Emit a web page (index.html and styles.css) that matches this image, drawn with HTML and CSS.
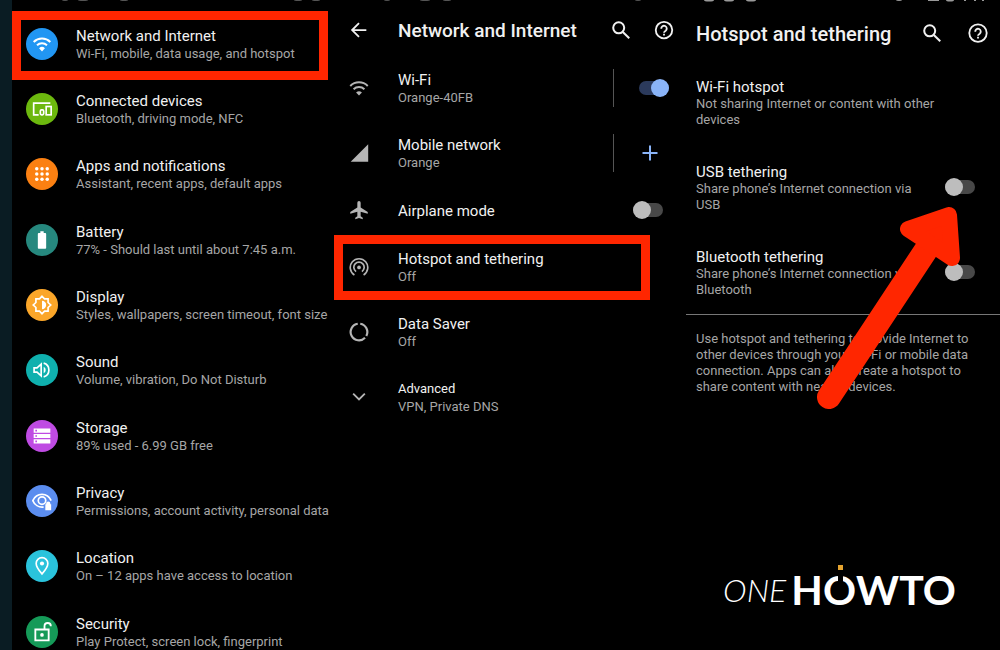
FILE: index.html
```
<!DOCTYPE html>
<html lang="en">
<head>
    <meta charset="UTF-8">
    <meta name="viewport" content="width=device-width, initial-scale=1.0">
    <title>Hotspot and tethering</title>
    <link rel="stylesheet" href="styles.css">
</head>
<body>
    <main class="screens">
        <section class="screen settings">
            <svg class="status" viewBox="0 0 322 4" fill="currentColor"><ellipse cx="53" cy="0" rx="3" ry="1"/><ellipse cx="71" cy="0" rx="5" ry="1"/><ellipse cx="112" cy="0" rx="4" ry="1"/><ellipse cx="286" cy="0" rx="4" ry="1"/><ellipse cx="304" cy="0" rx="4" ry="1"/></svg>
            <ul class="list">
                <li class="item">
                    <span class="badge blue">
                        <svg viewBox="0 0 24 24" fill="none" stroke="currentColor" stroke-width="2.4"><path d="M2 9.500a14.500 14.500 0 0 1 20 0M6 13.500a9 9 0 0 1 12 0"/><path d="M12 21l-3.500-4a5 5 0 0 1 7 0z" fill="currentColor" stroke="none"/></svg>
                    </span>
                    <div class="text">
                        <h3>Network and Internet</h3>
                        <p>Wi-Fi, mobile, data usage, and hotspot</p>
                    </div>
                </li>
                <li class="item">
                    <span class="badge green">
                        <svg viewBox="0 0 24 24" fill="none" stroke="currentColor" stroke-width="2"><path d="M22 5H2v14h6"/><rect x="10" y="13" width="4" height="6" rx="1.500"/><rect x="17" y="9" width="6" height="10"/></svg>
                    </span>
                    <div class="text">
                        <h3>Connected devices</h3>
                        <p>Bluetooth, driving mode, NFC</p>
                    </div>
                </li>
                <li class="item">
                    <span class="badge orange">
                        <svg viewBox="0 0 24 24" fill="currentColor"><circle cx="5" cy="5" r="2.300"/><circle cx="12" cy="5" r="2.300"/><circle cx="19" cy="5" r="2.300"/><circle cx="5" cy="12" r="2.300"/><circle cx="12" cy="12" r="2.300"/><circle cx="19" cy="12" r="2.300"/><circle cx="5" cy="19" r="2.300"/><circle cx="12" cy="19" r="2.300"/><circle cx="19" cy="19" r="2.300"/></svg>
                    </span>
                    <div class="text">
                        <h3>Apps and notifications</h3>
                        <p>Assistant, recent apps, default apps</p>
                    </div>
                </li>
                <li class="item">
                    <span class="badge teal">
                        <svg viewBox="0 0 24 24" fill="currentColor"><path d="M15.700 3.500H14V1.500h-4v2H8.300C7.600 3.500 7 4 7 4.800v16.400c0 .7.600 1.300 1.300 1.300h7.400c.7 0 1.300-.6 1.300-1.300V4.800c0-.8-.6-1.300-1.300-1.300z"/></svg>
                    </span>
                    <div class="text">
                        <h3>Battery</h3>
                        <p>77% - Should last until about 7:45 a.m.</p>
                    </div>
                </li>
                <li class="item">
                    <span class="badge amber">
                        <svg viewBox="0 0 24 24"><path d="M12 1.500l3 3.200h4.300V9l3.200 3-3.200 3v4.300H15l-3 3.200-3-3.200H4.700V15l-3.200-3 3.200-3V4.700H9z" fill="none" stroke="currentColor" stroke-width="2"/><path d="M12 7a5 5 0 0 1 0 10z" fill="currentColor"/></svg>
                    </span>
                    <div class="text">
                        <h3>Display</h3>
                        <p>Styles, wallpapers, screen timeout, font size</p>
                    </div>
                </li>
                <li class="item">
                    <span class="badge cyan">
                        <svg viewBox="0 0 24 24" fill="none" stroke="currentColor" stroke-width="2"><path d="M2.500 9.500v5H6l5 4.500V5L6 9.500z"/><path d="M14 3.800a8.500 8.500 0 0 1 0 16.400"/><path d="M14 8a4.500 4.500 0 0 1 0 8z" fill="currentColor" stroke="none"/></svg>
                    </span>
                    <div class="text">
                        <h3>Sound</h3>
                        <p>Volume, vibration, Do Not Disturb</p>
                    </div>
                </li>
                <li class="item">
                    <span class="badge purple">
                        <svg viewBox="0 0 24 24" fill="currentColor"><path fill-rule="evenodd" d="M2 3h20v5H2zM4 4.500v2h2v-2zM2 9.500h20v5H2zM4 11v2h2v-2zM2 16h20v5H2zM4 17.500v2h2v-2z"/></svg>
                    </span>
                    <div class="text">
                        <h3>Storage</h3>
                        <p>89% used - 6.99 GB free</p>
                    </div>
                </li>
                <li class="item">
                    <span class="badge indigo">
                        <svg viewBox="0 0 24 24"><g fill="none" stroke="currentColor" stroke-width="2"><path d="M14 19.200C8 20 3 16.500 1 11.500 3 7 7 4 12 4s9 3 11 7.500"/><circle cx="12" cy="11.500" r="4.500"/></g><path fill="currentColor" d="M16 16h1v-1a2.500 2.500 0 0 1 5 0v1h1v7h-7z"/></svg>
                    </span>
                    <div class="text">
                        <h3>Privacy</h3>
                        <p>Permissions, account activity, personal data</p>
                    </div>
                </li>
                <li class="item">
                    <span class="badge sky">
                        <svg viewBox="0 0 24 24"><path d="M12 21.500C8 17 5 13 5 9a7 7 0 0 1 14 0c0 4-3 8-7 12.500z" fill="none" stroke="currentColor" stroke-width="2"/><circle cx="12" cy="9" r="2.500" fill="currentColor"/></svg>
                    </span>
                    <div class="text">
                        <h3>Location</h3>
                        <p>On – 12 apps have access to location</p>
                    </div>
                </li>
                <li class="item">
                    <span class="badge emerald">
                        <svg viewBox="0 0 24 24"><path d="M4 9h16v13H4zM15 9V5a3.800 3.800 0 0 1 7.600 0" fill="none" stroke="currentColor" stroke-width="2.200"/><circle cx="12" cy="15.500" r="2.200" fill="currentColor"/></svg>
                    </span>
                    <div class="text">
                        <h3>Security</h3>
                        <p>Play Protect, screen lock, fingerprint</p>
                    </div>
                </li>
            </ul>
            <div class="highlight"></div>
        </section>

        <section class="screen network">
            <svg class="status" viewBox="0 0 352 4" fill="currentColor"><ellipse cx="53" cy="0" rx="3" ry="1"/><ellipse cx="91" cy="0" rx="5" ry="1"/><ellipse cx="113" cy="0" rx="4" ry="1"/><ellipse cx="304" cy="0" rx="3" ry="1"/></svg>
            <header class="bar">
                <button class="icon-btn back" aria-label="Back">
                    <svg viewBox="0 0 24 24" fill="none" stroke="currentColor" stroke-width="2"><path d="M20 11H4.500M12 3.500L4.500 11l7.500 7.500"/></svg>
                </button>
                <h2>Network and Internet</h2>
                <button class="icon-btn" aria-label="Search">
                    <svg viewBox="0 0 24 24" fill="none" stroke="currentColor" stroke-width="2.200"><circle cx="9.500" cy="8.500" r="6"/><path d="M14 13l7 7"/></svg>
                </button>
                <button class="icon-btn" aria-label="Help">
                    <svg viewBox="0 0 24 24" fill="none" stroke="currentColor" stroke-width="2"><circle cx="12" cy="11" r="9"/><path d="M9 9.500a3 3 0 1 1 4.800 2.200C12.600 12.500 12 13 12 14"/><path d="M12 15v2"/></svg>
                </button>
            </header>
            <ul class="list">
                <li class="item">
                    <span class="glyph">
                        <svg viewBox="0 0 24 24" fill="none" stroke="currentColor" stroke-width="2.400"><path d="M1.500 9.500a15 15 0 0 1 21 0M5.500 13.500a9.500 9.500 0 0 1 13 0"/><path d="M12 21l-3.500-3.500a5 5 0 0 1 7 0z" fill="currentColor" stroke="none"/></svg>
                    </span>
                    <div class="text">
                        <h3>Wi-Fi</h3>
                        <p>Orange-40FB</p>
                    </div>
                    <div class="action">
                        <input type="checkbox" class="switch" aria-label="Wi-Fi" checked>
                    </div>
                </li>
                <li class="item">
                    <span class="glyph">
                        <svg viewBox="0 0 24 24" fill="currentColor"><path d="M2 22.500h21v-21z"/></svg>
                    </span>
                    <div class="text">
                        <h3>Mobile network</h3>
                        <p>Orange</p>
                    </div>
                    <div class="action">
                        <button class="icon-btn add" aria-label="Add network">
                            <svg viewBox="0 0 24 24" fill="none" stroke="currentColor" stroke-width="2.400"><path d="M12 3v18M3 12h18"/></svg>
                        </button>
                    </div>
                </li>
                <li class="item short">
                    <span class="glyph">
                        <svg viewBox="0 0 24 24" fill="currentColor"><path d="M22.500 16.500v-2.200L14 9V3.200a2 2 0 0 0-4 0V9l-8.500 5.300v2.200L10 14v5.500L7.500 21.300V23l4.500-1.300 4.500 1.300v-1.700L14 19.500V14z"/></svg>
                    </span>
                    <div class="text">
                        <h3>Airplane mode</h3>
                    </div>
                    <input type="checkbox" class="switch" aria-label="Airplane mode">
                </li>
                <li class="item marked">
                    <span class="glyph">
                        <svg viewBox="0 0 24 24" fill="none" stroke="currentColor" stroke-width="2"><path d="M6.500 21.500a10.500 10.500 0 1 1 11 0M8.500 17.500a6.200 6.200 0 1 1 7 0"/><circle cx="12" cy="12.500" r="2.200" fill="currentColor" stroke="none"/></svg>
                    </span>
                    <div class="text">
                        <h3>Hotspot and tethering</h3>
                        <p>Off</p>
                    </div>
                    <div class="highlight"></div>
                </li>
                <li class="item">
                    <span class="glyph">
                        <svg viewBox="0 0 24 24" fill="none" stroke="currentColor" stroke-width="2.600"><path d="M10.500 2.100a10 10 0 1 0 8.700 16.800M13.500 2.100a10 10 0 0 1 7.300 14.600"/></svg>
                    </span>
                    <div class="text">
                        <h3>Data Saver</h3>
                        <p>Off</p>
                    </div>
                </li>
                <li class="item">
                    <span class="glyph">
                        <svg viewBox="0 0 24 24" fill="none" stroke="currentColor" stroke-width="2.200"><path d="M5 8l7 7 7-7"/></svg>
                    </span>
                    <div class="text">
                        <h3 class="small">Advanced</h3>
                        <p>VPN, Private DNS</p>
                    </div>
                </li>
            </ul>
        </section>

        <section class="screen tethering">
            <svg class="status bright" viewBox="0 0 314 4" fill="currentColor"><ellipse cx="23" cy="0" rx="5" ry="1.500"/><ellipse cx="43" cy="0" rx="5" ry="1.500"/><ellipse cx="65" cy="0" rx="5" ry="1.500"/><ellipse cx="213" cy="0" rx="3" ry="1"/><path d="M242 0h11v1h-11z"/><ellipse cx="264" cy="0" rx="4" ry="1.500"/><path d="M278 0h2v1h-2zM288 0h2v1h-2zM296 0h2v1h-2z"/></svg>
            <header class="bar">
                <h2>Hotspot and tethering</h2>
                <button class="icon-btn" aria-label="Search">
                    <svg viewBox="0 0 24 24" fill="none" stroke="currentColor" stroke-width="2.200"><circle cx="9.500" cy="8.500" r="6"/><path d="M14 13l7 7"/></svg>
                </button>
                <button class="icon-btn" aria-label="Help">
                    <svg viewBox="0 0 24 24" fill="none" stroke="currentColor" stroke-width="2"><circle cx="12" cy="11" r="9.500"/><path d="M9 9.500a3 3 0 1 1 4.800 2.200C12.600 12.500 12 13 12 14"/><path d="M12 15v2"/></svg>
                </button>
            </header>
            <ul class="list">
                <li class="item">
                    <div class="text">
                        <h3>Wi-Fi hotspot</h3>
                        <p>Not sharing Internet or content with other devices</p>
                    </div>
                </li>
                <li class="item">
                    <div class="text">
                        <h3>USB tethering</h3>
                        <p>Share phone’s Internet connection via USB</p>
                    </div>
                    <input type="checkbox" class="switch" aria-label="USB tethering">
                </li>
                <li class="item">
                    <div class="text">
                        <h3>Bluetooth tethering</h3>
                        <p>Share phone’s Internet connection via Bluetooth</p>
                    </div>
                    <input type="checkbox" class="switch" aria-label="Bluetooth tethering">
                </li>
            </ul>
            <p class="note">Use hotspot and tethering to provide Internet to other devices through your Wi-Fi or mobile data connection. Apps can also create a hotspot to share content with nearby devices.</p>
            <div class="logo">
                <span class="one">ONE</span>
                <span class="howto">H<span class="power">O</span>WTO</span>
            </div>
            <svg class="arrow" viewBox="0 0 150 206" fill="#ff2600" stroke="#ff2600"><path d="M16 194L117 41" fill="none" stroke-width="24" stroke-linecap="round"/><path d="M136 12L95 26L139 55z" stroke-width="16" stroke-linejoin="round"/></svg>
        </section>
    </main>
</body>
</html>
```
FILE: styles.css
```
* {
    margin: 0;
    padding: 0;
    box-sizing: border-box;
}

body {
    font-family: Roboto, "Liberation Sans", sans-serif;
    background: #000;
    color: #f1f1f1;
    min-height: 100vh;
    overflow: hidden;
}

h2,
h3 {
    font-weight: 400;
}

h2 {
    flex: 1;
    font-size: 19px;
    font-weight: 500;
    line-height: 24px;
    white-space: nowrap;
}

h3 {
    font-size: 15px;
    line-height: 18px;
}

h3.small {
    font-size: 13px;
}

p {
    color: #a6a6a6;
    font-size: 13px;
    line-height: 18px;
}

ul {
    list-style: none;
}

.screens {
    display: grid;
    grid-template-columns: 322fr 352fr 314fr;
    height: 100vh;
    border-left: 12px solid #0a1c23;
    overflow: hidden;
}

.screen {
    position: relative;
    min-width: 0;
}

/* Bottom edge of the scrolled-off status bar */
.status {
    position: absolute;
    top: 0;
    left: 0;
    width: 100%;
    color: #555;
}

.status.bright {
    color: #999;
}

.item {
    position: relative;
    display: flex;
    align-items: center;
    height: 65px;
}

.text {
    flex: 1;
    min-width: 0;
    padding-top: 2px;
}

.highlight {
    position: absolute;
    border: 9px solid #ff2600;
}

/* Settings list */
.settings .list {
    padding: 11px 0 0 14px;
}

.settings .item {
    gap: 18px;
    white-space: nowrap;
}

.settings .item:nth-child(3n) {
    margin-bottom: 1px;
}

.settings .highlight {
    top: 11px;
    left: 0;
    right: 6px;
    height: 69px;
}

.badge {
    display: flex;
    align-items: center;
    justify-content: center;
    width: 32px;
    height: 32px;
    border-radius: 50%;
    color: #fff;
}

.badge svg {
    width: 20px;
    height: 20px;
}

.blue { background: #2196f3; }
.green { background: #6cb80e; }
.orange { background: #fb8012; }
.teal { background: #26887e; }
.amber { background: #fba629; }
.cyan { background: #0fb0ae; }
.purple { background: #bf4be3; }
.indigo { background: #5b8def; }
.sky { background: #2ac3dc; }
.emerald { background: #159a58; }

.orange svg {
    width: 18px;
    height: 18px;
}

/* Title bars */
.bar {
    display: flex;
    align-items: center;
}

.icon-btn {
    display: flex;
    align-items: center;
    justify-content: center;
    width: 22px;
    height: 22px;
    background: none;
    border: none;
    color: #f1f1f1;
    cursor: pointer;
}

.icon-btn svg {
    width: 100%;
    height: 100%;
}

/* Network and Internet */
.network .bar {
    padding: 19px 11px 0 14px;
    gap: 21px;
}

.network .bar h2 {
    margin-left: 7px;
}

.network .list {
    padding: 12px 17px 0 15px;
}

.network .item {
    gap: 29px;
}

.network .item.short {
    height: 49px;
    padding-right: 6px;
}

.glyph {
    display: flex;
    width: 20px;
    height: 20px;
    color: #b5b5b5;
}

.action {
    display: flex;
    align-items: center;
    justify-content: flex-end;
    width: 56px;
    height: 38px;
    border-left: 1px solid #555;
}

.icon-btn.add {
    width: 20px;
    height: 20px;
    margin-right: 9px;
    color: #8ab4f8;
}

.network .marked .highlight {
    top: 1px;
    bottom: -1px;
    left: -15px;
    right: 19px;
}

.switch {
    appearance: none;
    position: relative;
    width: 30px;
    height: 14px;
    background: #484848;
    border-radius: 7px;
    cursor: pointer;
}

.switch::before {
    content: "";
    position: absolute;
    top: -2px;
    left: 0;
    width: 18px;
    height: 18px;
    border-radius: 50%;
    background: #bdbdbd;
}

.switch:checked {
    background: #2b3a5c;
}

.switch:checked::before {
    left: 12px;
    background: #8ab4f8;
}

/* Hotspot and tethering */
.tethering .bar {
    padding: 22px 11px 0 10px;
    gap: 24px;
}

.tethering h2 {
    font-size: 20px;
}

.tethering .list {
    padding: 13px 25px 0 10px;
    border-bottom: 1px solid #777;
}

.tethering .item {
    height: 85px;
    gap: 20px;
}

.tethering p {
    line-height: 16px;
}

.note {
    padding: 16px 12px 0 10px;
}

.logo {
    display: flex;
    align-items: center;
    justify-content: center;
    gap: 5px;
    padding: 174px 7px 0 0;
    color: #fff;
    font-family: Lato, sans-serif;
    line-height: 1;
}

.one {
    font-size: 32px;
    font-style: italic;
    font-weight: 300;
}

.howto {
    font-size: 41px;
    font-weight: 700;
}

/* Power-button look: a notch in the O with a spark above */
.power {
    position: relative;
}

.power::before,
.power::after {
    content: "";
    position: absolute;
    left: 50%;
    width: 5px;
    height: 5px;
    margin-left: -2px;
    background: #e5a430;
}

.power::before {
    top: 0;
}

.power::after {
    top: 8px;
    height: 9px;
    background: #000;
}

.arrow {
    position: absolute;
    top: 203px;
    right: 37px;
    width: 150px;
    height: 206px;
}
```
